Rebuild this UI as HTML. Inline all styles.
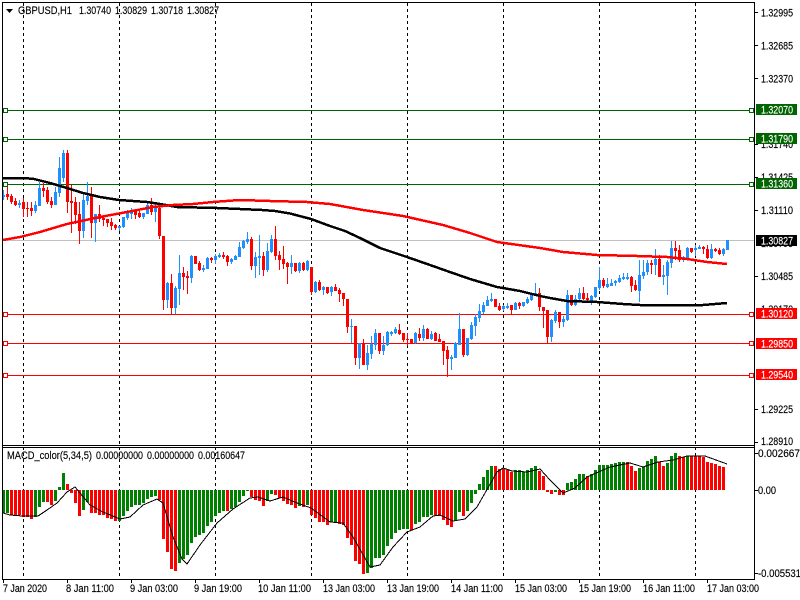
<!DOCTYPE html>
<html><head><meta charset="utf-8"><title>GBPUSD,H1</title>
<style>
html,body{margin:0;padding:0;background:#fff;width:800px;height:600px;overflow:hidden}
svg{display:block}
text{font-family:"Liberation Sans",Arial,sans-serif;font-size:11px;fill:#000;stroke:#000;stroke-width:.15px}
.w text{fill:#fff;stroke:#fff}
</style></head><body>
<svg width="800" height="600" viewBox="0 0 800 600" xmlns="http://www.w3.org/2000/svg">
<rect width="800" height="600" fill="#fff"/>
<g shape-rendering="crispEdges">
<path fill="none" stroke="#000" stroke-dasharray="3 3" d="M23.5 3V445M119.5 3V445M215.5 3V445M311.5 3V445M407.5 3V445M503.5 3V445M599.5 3V445M695.5 3V445M23.5 447V579M119.5 447V579M215.5 447V579M311.5 447V579M407.5 447V579M503.5 447V579M599.5 447V579M695.5 447V579"/>
<path fill="none" stroke="#c0c0c0" d="M3 240.5H754"/>
<!-- MACD histogram -->
<path fill="none" stroke="#008000" stroke-width="3" d="M3.5 490V513M7.5 490V513M35.5 490V517M39.5 490V507M43.5 490V502M55.5 490V501M59.5 490V487M63.5 490V473M83.5 490V510M87.5 490V502M119.5 490V521M123.5 490V516M127.5 490V511M131.5 490V507M135.5 490V505M139.5 490V505M143.5 490V503M147.5 490V499M151.5 490V497M155.5 490V496M179.5 490V563M183.5 490V559M187.5 490V555M191.5 490V543M195.5 490V537M199.5 490V535M203.5 490V533M207.5 490V526M211.5 490V522M215.5 490V516M219.5 490V513M223.5 490V511M231.5 490V509M235.5 490V507M239.5 490V502M243.5 490V496M247.5 490V491M267.5 490V501M271.5 490V494M299.5 490V506M307.5 490V505M331.5 490V522M335.5 490V522M367.5 490V573M371.5 490V568M375.5 490V558M379.5 490V558M383.5 490V555M387.5 490V546M391.5 490V539M395.5 490V533M399.5 490V530M403.5 490V529M407.5 490V529M415.5 490V524M419.5 490V522M423.5 490V517M427.5 490V517M431.5 490V515M455.5 490V521M459.5 490V512M467.5 490V511M471.5 490V503M475.5 490V494M479.5 490V484M483.5 490V477M487.5 490V470M491.5 490V466M515.5 490V470M519.5 490V470M523.5 490V472M527.5 490V470M531.5 490V468M535.5 490V466M555.5 490V492M567.5 490V483M571.5 490V482M575.5 490V479M579.5 490V474M583.5 490V474M591.5 490V474M595.5 490V470M599.5 490V465M603.5 490V465M607.5 490V465M611.5 490V464M615.5 490V463M619.5 490V462M623.5 490V462M639.5 490V468M643.5 490V467M647.5 490V461M651.5 490V459M655.5 490V456M667.5 490V463M671.5 490V456M675.5 490V453M687.5 490V456"/>
<path fill="none" stroke="#ff0000" stroke-width="3" d="M11.5 490V515M15.5 490V515M19.5 490V515M23.5 490V517M27.5 490V517M31.5 490V519M47.5 490V502M51.5 490V505M67.5 490V484M71.5 490V493M75.5 490V503M79.5 490V516M91.5 490V513M95.5 490V513M99.5 490V515M103.5 490V515M107.5 490V518M111.5 490V519M115.5 490V521M159.5 490V500M163.5 490V539M167.5 490V552M171.5 490V569M175.5 490V571M227.5 490V511M251.5 490V497M255.5 490V500M259.5 490V501M263.5 490V506M275.5 490V495M279.5 490V498M283.5 490V501M287.5 490V504M291.5 490V505M295.5 490V508M303.5 490V507M311.5 490V515M315.5 490V518M319.5 490V522M323.5 490V522M327.5 490V525M339.5 490V524M343.5 490V525M347.5 490V538M351.5 490V545M355.5 490V561M359.5 490V564M363.5 490V574M411.5 490V530M435.5 490V515M439.5 490V516M443.5 490V520M447.5 490V525M451.5 490V527M463.5 490V516M495.5 490V466M499.5 490V469M503.5 490V469M507.5 490V470M511.5 490V472M539.5 490V471M543.5 490V476M547.5 490V492M551.5 490V494M559.5 490V495M563.5 490V495M587.5 490V476M627.5 490V462M631.5 490V466M635.5 490V471M659.5 490V462M663.5 490V466M679.5 490V456M683.5 490V457M691.5 490V456M695.5 490V456M699.5 490V456M703.5 490V457M707.5 490V462M711.5 490V463M715.5 490V464M719.5 490V466M723.5 490V467"/>
<!-- horizontal lines -->
<path fill="none" stroke="#006400" d="M3 110.5H754M3 139.5H754M3 184.5H754"/>
<path fill="none" stroke="#ff0000" d="M3 314.5H754M3 343.5H754M3 375.5H754"/>
<!-- blue candles -->
<path fill="none" stroke="#1e90ff" d="M3.5 190V200M19.5 200V208M35.5 201V213M39.5 182V206M55.5 187V205M59.5 157V197M63.5 150V182M83.5 194V238M87.5 182V205M95.5 214V242M119.5 226V231M123.5 217V228M127.5 210V220M131.5 208V219M143.5 213V219M147.5 203V214M155.5 202V222M167.5 282V308M175.5 286V314M179.5 255V305M191.5 255V283M203.5 265V272M207.5 257V269M215.5 254V264M219.5 253V258M231.5 258V264M235.5 255V260M239.5 242V257M243.5 240V249M247.5 232V244M255.5 252V278M259.5 235V275M267.5 243V272M271.5 235V253M291.5 255V274M299.5 262V273M307.5 260V271M315.5 281V293M323.5 286V295M331.5 286V296M351.5 319V343M359.5 343V369M367.5 345V370M371.5 336V359M375.5 329V350M383.5 336V355M387.5 331V346M391.5 331V336M395.5 327V334M415.5 332V344M423.5 325V341M431.5 331V340M451.5 355V370M455.5 342V358M459.5 313V345M467.5 338V356M471.5 322V340M475.5 314V336M479.5 304V322M483.5 302V314M487.5 296V306M491.5 293V302M503.5 305V311M507.5 303V309M515.5 302V310M523.5 302V307M527.5 297V304M531.5 293V301M535.5 283V296M551.5 319V342M555.5 310V323M563.5 316V327M567.5 290V321M575.5 295V306M579.5 288V300M591.5 295V305M595.5 287V298M599.5 267V290M607.5 278V288M611.5 279V286M615.5 280V286M619.5 275V283M623.5 273V280M627.5 273V280M639.5 260V302M643.5 260V279M647.5 260V275M655.5 249V275M663.5 265V285M667.5 260V295M671.5 241V268M683.5 256V262M687.5 247V259M695.5 245V256M699.5 245V249M711.5 244V259M723.5 248V256M727.5 240V250"/>
<path fill="none" stroke="#1e90ff" stroke-width="3" d="M3.5 195V197M19.5 203V205M35.5 205V211M39.5 188V206M55.5 192V205M59.5 168V193M63.5 153V178M83.5 200V231M87.5 196V201M95.5 214V223M119.5 226V228M123.5 217V227M127.5 213V218M131.5 212V214M143.5 213V217M147.5 205V214M155.5 208V212M167.5 283V300M175.5 288V308M179.5 273V289M191.5 256V278M203.5 268V270M207.5 258V269M215.5 256V260M219.5 255V257M231.5 259V262M235.5 256V260M239.5 247V257M243.5 241V248M247.5 239V242M255.5 257V266M259.5 256V258M267.5 251V270M271.5 239V252M291.5 263V267M299.5 263V271M307.5 261V270M315.5 282V292M323.5 287V290M331.5 287V292M351.5 326V327M359.5 343V358M367.5 353V365M371.5 344V354M375.5 333V345M383.5 345V351M387.5 332V345M391.5 332V334M395.5 329V333M415.5 333V343M423.5 329V338M431.5 334V339M451.5 357V359M455.5 343V358M459.5 329V345M467.5 338V355M471.5 325V339M475.5 317V326M479.5 311V318M483.5 305V312M487.5 300V306M491.5 299V301M503.5 306V309M507.5 306V308M515.5 303V310M523.5 302V306M527.5 299V303M531.5 294V300M535.5 293V296M551.5 320V337M555.5 312V321M563.5 319V322M567.5 295V320M575.5 299V305M579.5 293V299M591.5 296V302M595.5 287V297M599.5 280V288M607.5 284V287M611.5 283V286M615.5 281V283M619.5 278V282M623.5 277V279M627.5 277V279M639.5 275V291M643.5 272V276M647.5 263V272M655.5 259V265M663.5 275V277M667.5 262V276M671.5 248V263M683.5 257V259M687.5 248V258M695.5 248V250M699.5 247V249M711.5 249V258M723.5 249V254M727.5 240V250"/>
<!-- red candles -->
<path fill="none" stroke="#ff0000" d="M7.5 187V200M11.5 194V204M15.5 198V206M23.5 198V217M27.5 202V217M31.5 202V216M43.5 183V197M47.5 187V204M51.5 197V208M67.5 150V213M71.5 185V233M75.5 197V224M79.5 202V244M91.5 187V238M99.5 205V222M103.5 216V226M107.5 219V227M111.5 218V230M115.5 224V230M135.5 209V219M139.5 209V218M151.5 198V215M159.5 206V239M163.5 236V310M171.5 274V315M183.5 267V290M187.5 271V294M195.5 256V264M199.5 261V271M211.5 257V263M223.5 252V259M227.5 255V266M251.5 237V270M263.5 252V276M275.5 226V260M279.5 251V270M283.5 246V269M287.5 262V284M295.5 263V272M303.5 262V271M311.5 267V295M319.5 280V291M327.5 287V294M335.5 284V291M339.5 288V302M343.5 293V306M347.5 299V333M355.5 326V365M363.5 339V365M379.5 333V354M399.5 324V335M403.5 333V342M407.5 333V346M411.5 339V344M419.5 328V341M427.5 328V339M435.5 332V341M439.5 334V342M443.5 341V365M447.5 346V377M463.5 329V357M495.5 299V307M499.5 303V311M511.5 305V314M519.5 302V309M539.5 288V311M543.5 307V328M547.5 310V343M559.5 312V328M571.5 295V306M583.5 287V300M587.5 293V302M603.5 278V288M631.5 276V292M635.5 280V291M651.5 260V274M659.5 255V277M675.5 241V260M679.5 245V262M691.5 248V253M703.5 246V254M707.5 245V259M715.5 248V252M719.5 248V255"/>
<path fill="none" stroke="#ff0000" stroke-width="3" d="M7.5 194V197M11.5 196V202M15.5 201V205M23.5 202V209M27.5 208V209M31.5 208V211M43.5 188V191M47.5 190V202M51.5 201V205M67.5 153V202M71.5 201V203M75.5 202V215M79.5 214V231M91.5 196V223M99.5 214V219M103.5 218V220M107.5 219V223M111.5 222V226M115.5 225V228M135.5 210V215M139.5 213V217M151.5 205V212M159.5 208V236M163.5 236V300M171.5 283V308M183.5 273V277M187.5 276V278M195.5 256V264M199.5 263V270M211.5 258V260M223.5 255V257M227.5 256V262M251.5 239V266M263.5 256V270M275.5 239V256M279.5 255V260M283.5 259V264M287.5 263V267M295.5 263V271M303.5 263V270M311.5 267V292M319.5 282V290M327.5 287V293M335.5 287V291M339.5 290V294M343.5 293V299M347.5 299V327M355.5 326V358M363.5 343V365M379.5 333V351M399.5 330V334M403.5 333V340M407.5 339V340M411.5 339V343M419.5 334V338M427.5 329V339M435.5 333V341M439.5 339V342M443.5 341V351M447.5 350V359M463.5 329V355M495.5 299V307M499.5 306V310M511.5 305V310M519.5 303V306M539.5 293V307M543.5 307V311M547.5 310V337M559.5 312V322M571.5 295V305M583.5 293V299M587.5 298V300M603.5 280V286M631.5 277V286M635.5 285V290M651.5 263V265M659.5 259V277M675.5 248V251M679.5 250V260M691.5 248V252M703.5 247V249M707.5 249V258M715.5 249V251M719.5 250V254"/>
</g>
<!-- moving averages -->
<polyline shape-rendering="crispEdges" fill="none" stroke="#000" stroke-width="2.5" points="3,178 24,178 34,179 50,183 67,188 83,193 100,197 119,200 147,202 160,204 177,207 217,208 240,209 262,210 275,211 290,213.5 311,219 330,226 345,231 360,238 380,248 407,257 430,265 447,271 470,279 497,287 520,291 540,296 550,298 567,301 597,302 623,304 640,305 703,305 727,303"/>
<polyline shape-rendering="crispEdges" fill="none" stroke="#ff0000" stroke-width="2.5" points="3,240 20,237 40,232 67,224 100,217 127,212 153,207 173,205 193,204 213,202 240,200 270,201 307,202 330,204 363,210 403,216 443,225 470,233 497,242 540,248 563,252 597,255 637,256 667,257 687,259 707,262 727,264"/>
<!-- MACD signal -->
<polyline shape-rendering="crispEdges" fill="none" stroke="#000" stroke-width="1" points="3,513 10,515 23,516 38,516 47,510 57,503 67,492 75,487 80,493 90,505 103,512 120,519 130,517 143,505 157,499 163,503 173,537 182,559 187,564 200,545 217,523 233,509 250,498 258,497 270,501 283,497 297,503 311,508 330,522 343,523 353,537 370,567 380,565 393,547 407,532 420,527 433,516 440,515 453,521 465,519 477,507 497,472 503,468 512,471 527,472 540,469 550,480 563,493 575,488 587,477 610,467 630,463 643,467 658,462 673,460 687,456 705,456 727,464"/>
<!-- handles -->
<g shape-rendering="crispEdges" fill="#fff">
<g stroke="#006400"><rect x="3.5" y="108.5" width="4" height="4"/><rect x="3.5" y="137.5" width="4" height="4"/><rect x="3.5" y="182.5" width="4" height="4"/><rect x="749.5" y="108.5" width="4" height="4"/><rect x="749.5" y="137.5" width="4" height="4"/><rect x="749.5" y="182.5" width="4" height="4"/></g>
<g stroke="#ff0000"><rect x="3.5" y="312.5" width="4" height="4"/><rect x="3.5" y="341.5" width="4" height="4"/><rect x="3.5" y="373.5" width="4" height="4"/><rect x="749.5" y="312.5" width="4" height="4"/><rect x="749.5" y="341.5" width="4" height="4"/><rect x="749.5" y="373.5" width="4" height="4"/></g>
</g>
<!-- frame -->
<g shape-rendering="crispEdges" fill="#000">
<rect x="2" y="2" width="753" height="1"/><rect x="2" y="2" width="1" height="578"/><rect x="754" y="2" width="1" height="578"/>
<rect x="2" y="445" width="753" height="1"/><rect x="2" y="447" width="753" height="1"/><rect x="2" y="579" width="753" height="1"/>
<path fill="none" stroke="#000" d="M755 12.5H758M755 45.5H758M755 78.5H758M755 144.5H758M755 177.5H758M755 210.5H758M755 276.5H758M755 409.5H758M755 442.5H758M755 453.5H758M755 490.5H758M755 573.5H758M3.5 580V583M67.5 580V583M131.5 580V583M195.5 580V583M259.5 580V583M323.5 580V583M387.5 580V583M451.5 580V583M515.5 580V583M579.5 580V583M643.5 580V583M707.5 580V583"/>
</g>
<path d="M6 9H13L9.5 13Z" fill="#000"/>
<!-- header -->
<text x="18" y="14" textLength="54" lengthAdjust="spacingAndGlyphs">GBPUSD,H1</text>
<text x="79" y="14" textLength="32" lengthAdjust="spacingAndGlyphs">1.30740</text>
<text x="115" y="14" textLength="32" lengthAdjust="spacingAndGlyphs">1.30829</text>
<text x="151" y="14" textLength="32" lengthAdjust="spacingAndGlyphs">1.30718</text>
<text x="187" y="14" textLength="32" lengthAdjust="spacingAndGlyphs">1.30827</text>
<text x="7" y="459" textLength="85" lengthAdjust="spacingAndGlyphs">MACD_color(5,34,5)</text>
<text x="96" y="459" textLength="47" lengthAdjust="spacingAndGlyphs">0.00000000</text>
<text x="147" y="459" textLength="47" lengthAdjust="spacingAndGlyphs">0.00000000</text>
<text x="198" y="459" textLength="47" lengthAdjust="spacingAndGlyphs">0.00160647</text>
<!-- price scale -->
<g>
<text x="761" y="16.5" textLength="32" lengthAdjust="spacingAndGlyphs">1.32995</text>
<text x="761" y="49.5" textLength="32" lengthAdjust="spacingAndGlyphs">1.32685</text>
<text x="761" y="82.5" textLength="32" lengthAdjust="spacingAndGlyphs">1.32370</text>
<text x="761" y="148" textLength="32" lengthAdjust="spacingAndGlyphs">1.31740</text>
<text x="761" y="181" textLength="32" lengthAdjust="spacingAndGlyphs">1.31425</text>
<text x="761" y="214" textLength="32" lengthAdjust="spacingAndGlyphs">1.31110</text>
<text x="761" y="247" textLength="32" lengthAdjust="spacingAndGlyphs">1.30795</text>
<text x="761" y="280" textLength="32" lengthAdjust="spacingAndGlyphs">1.30485</text>
<text x="761" y="313" textLength="32" lengthAdjust="spacingAndGlyphs">1.30170</text>
<text x="761" y="413" textLength="32" lengthAdjust="spacingAndGlyphs">1.29225</text>
<text x="761" y="445" textLength="32" lengthAdjust="spacingAndGlyphs">1.28910</text>
<text x="758" y="457" textLength="42" lengthAdjust="spacingAndGlyphs">0.002667</text>
<text x="758" y="494" textLength="18" lengthAdjust="spacingAndGlyphs">0.00</text>
<text x="758" y="577" textLength="43" lengthAdjust="spacingAndGlyphs">-0.005531</text>
</g>
<g shape-rendering="crispEdges">
<rect x="756" y="104" width="41" height="11" fill="#006400"/>
<rect x="756" y="133" width="41" height="11" fill="#006400"/>
<rect x="756" y="178" width="41" height="11" fill="#006400"/>
<rect x="756" y="235" width="41" height="11" fill="#000"/>
<rect x="756" y="308" width="41" height="11" fill="#ff0000"/>
<rect x="756" y="338" width="41" height="11" fill="#ff0000"/>
<rect x="756" y="369" width="41" height="11" fill="#ff0000"/>
</g>
<g class="w">
<text x="761" y="113.5" textLength="32" lengthAdjust="spacingAndGlyphs">1.32070</text>
<text x="761" y="142.5" textLength="32" lengthAdjust="spacingAndGlyphs">1.31790</text>
<text x="761" y="187.5" textLength="32" lengthAdjust="spacingAndGlyphs">1.31360</text>
<text x="761" y="244.5" textLength="32" lengthAdjust="spacingAndGlyphs">1.30827</text>
<text x="761" y="317.5" textLength="32" lengthAdjust="spacingAndGlyphs">1.30120</text>
<text x="761" y="347.5" textLength="32" lengthAdjust="spacingAndGlyphs">1.29850</text>
<text x="761" y="378.5" textLength="32" lengthAdjust="spacingAndGlyphs">1.29540</text>
</g>
<!-- time scale -->
<g>
<text x="3" y="592" textLength="44" lengthAdjust="spacingAndGlyphs">7 Jan 2020</text>
<text x="66" y="592" textLength="48" lengthAdjust="spacingAndGlyphs">8 Jan 11:00</text>
<text x="130" y="592" textLength="48" lengthAdjust="spacingAndGlyphs">9 Jan 03:00</text>
<text x="194" y="592" textLength="48" lengthAdjust="spacingAndGlyphs">9 Jan 19:00</text>
<text x="258" y="592" textLength="53" lengthAdjust="spacingAndGlyphs">10 Jan 11:00</text>
<text x="323" y="592" textLength="52" lengthAdjust="spacingAndGlyphs">13 Jan 03:00</text>
<text x="387" y="592" textLength="52" lengthAdjust="spacingAndGlyphs">13 Jan 19:00</text>
<text x="451" y="592" textLength="52" lengthAdjust="spacingAndGlyphs">14 Jan 11:00</text>
<text x="515" y="592" textLength="52" lengthAdjust="spacingAndGlyphs">15 Jan 03:00</text>
<text x="579" y="592" textLength="52" lengthAdjust="spacingAndGlyphs">15 Jan 19:00</text>
<text x="643" y="592" textLength="52" lengthAdjust="spacingAndGlyphs">16 Jan 11:00</text>
<text x="707" y="592" textLength="52" lengthAdjust="spacingAndGlyphs">17 Jan 03:00</text>
</g>
</svg>
</body></html>
